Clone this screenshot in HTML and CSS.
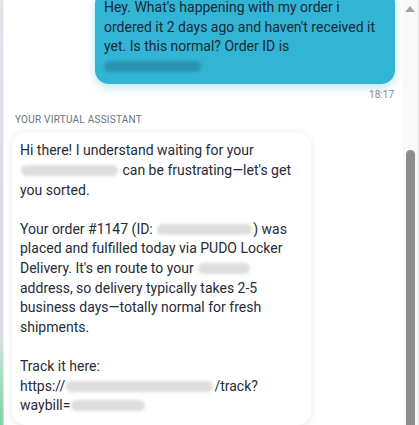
FILE: index.html
```html
<!DOCTYPE html>
<html>
<head>
<meta charset="utf-8">
<link rel="stylesheet" href="styles.css">
</head>
<body>
<div class="app">
  <div class="edge"></div>
  <main class="chat">
    <div class="msg-user">
      <div class="bubble user">Hey. What's happening with my order i ordered it 2 days ago and haven't received it yet. Is this normal? Order ID is <span class="blur dark w97"></span></div>
      <div class="time">18:17</div>
    </div>
    <div class="label">YOUR VIRTUAL ASSISTANT</div>
    <div class="bubble bot">
      <p>Hi there! I understand waiting for your <span class="blur w98"></span> can be frustrating—let's get you sorted.</p>
      <p>Your order #1147 (ID: <span class="blur w96"></span>) was placed and fulfilled today via PUDO Locker Delivery. It's en route to your <span class="blur w53"></span> address, so delivery typically takes 2-5 business days—totally normal for fresh shipments.</p>
      <p>Track it here:<br>https://<span class="blur w148"></span>/track?<br>waybill=<span class="blur w75"></span></p>
    </div>
  </main>
  <div class="scrollbar">
    <div class="arrow"></div>
    <div class="thumb"></div>
  </div>
</div>
</body>
</html>
```
FILE: styles.css
```css
html, body {
  margin: 0;
  padding: 0;
  height: 100%;
  overflow: hidden;
  background: #ffffff;
}

.app {
  display: flex;
  height: 425px;
  font-family: Roboto, "Liberation Sans", sans-serif;
}

.edge {
  width: 4px;
  flex: none;
  background:
    linear-gradient(to right, rgba(255,255,255,0) 0, rgba(255,255,255,0) 60%, rgba(255,255,255,0.7) 100%),
    linear-gradient(to bottom, #e2e4ea 0, #d7dbe4 55%, #d9dde3 80%, #aee0c7 86%, #7fd2a6 100%);
}

.chat {
  flex: 1;
  display: flex;
  flex-direction: column;
  padding: 0 8px;
  min-width: 0;
}

.msg-user {
  display: flex;
  flex-direction: column;
  align-items: flex-end;
  margin-top: -10px;
}

.bubble {
  font-size: 14px;
  line-height: 19.6px;
  border-radius: 14px;
}

.user {
  width: 300px;
  box-sizing: border-box;
  padding: 8px 10px 8px 9px;
  background: #32b4d4;
  color: #1b2a38;
  box-shadow: 0 3px 10px rgba(50, 180, 212, 0.35);
}

.time {
  margin-top: 4px;
  padding-right: 1px;
  font-size: 10px;
  line-height: 14px;
  color: #8a8a8a;
}

.label {
  margin-top: 11px;
  padding-left: 3px;
  font-size: 10px;
  line-height: 14px;
  letter-spacing: 0.25px;
  color: #6b7280;
}

.bot {
  margin-top: 5px;
  width: 299px;
  box-sizing: border-box;
  padding: 9px 10px 9px 8px;
  background: #ffffff;
  color: #262b36;
  box-shadow: 0 1px 7px rgba(0, 0, 0, 0.09);
}

.bot p {
  margin: 0;
}

.bot p + p {
  margin-top: 19.6px;
}

.blur {
  display: inline-block;
  height: 11px;
  margin: 0 1px;
  vertical-align: -1px;
  border-radius: 6px;
  background: #dedede;
  filter: blur(1.6px);
}

.blur.dark {
  margin: 0;
  background: rgba(20, 70, 95, 0.28);
}

.w53 { width: 52px; }
.w75 { width: 74px; }
.w96 { width: 95px; }
.w97 { width: 97px; }
.w98 { width: 97px; }
.w148 { width: 147px; }

.scrollbar {
  width: 15px;
  flex: none;
  display: flex;
  flex-direction: column;
  align-items: flex-start;
  background: #f9f9f9;
  border-right: 1px solid #e2e2e2;
}

.arrow {
  margin: 6px 0 0 2px;
  width: 0;
  height: 0;
  border-left: 5px solid transparent;
  border-right: 5px solid transparent;
  border-bottom: 6px solid #a3a3a3;
}

.thumb {
  margin: 138px 0 0 3px;
  width: 9px;
  flex: 1;
  border-radius: 5px 5px 0 0;
  background: #8c8c8c;
}
```
